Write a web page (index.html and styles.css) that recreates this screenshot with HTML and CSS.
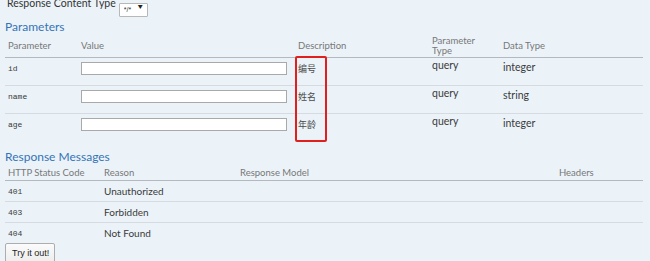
FILE: index.html
```html
<!DOCTYPE html>
<html lang="en">

<head>
	<title>Operation</title>
	<link rel="stylesheet" href="styles.css">
</head>

<body>

	<div class="operation">
		<div class="content-type">
			<label>Response Content Type</label>
			<div class="select-wrap">
				<select>
					<option>*/*</option>
				</select>
			</div>
		</div>

		<h4>Parameters</h4>
		<div class="params-wrap">
			<table class="params">
				<colgroup>
					<col class="c-name">
					<col class="c-value">
					<col class="c-desc">
					<col class="c-ptype">
					<col class="c-dtype">
				</colgroup>
				<thead>
					<tr>
						<th>Parameter</th>
						<th>Value</th>
						<th>Description</th>
						<th class="two-line">Parameter<br>Type</th>
						<th>Data Type</th>
					</tr>
				</thead>
				<tbody>
					<tr>
						<td class="code">id</td>
						<td><input class="param-input" type="text"></td>
						<td class="desc">编号</td>
						<td class="ptype">query</td>
						<td class="dtype">integer</td>
					</tr>
					<tr>
						<td class="code">name</td>
						<td><input class="param-input" type="text"></td>
						<td class="desc">姓名</td>
						<td class="ptype">query</td>
						<td class="dtype">string</td>
					</tr>
					<tr>
						<td class="code">age</td>
						<td><input class="param-input" type="text"></td>
						<td class="desc">年龄</td>
						<td class="ptype">query</td>
						<td class="dtype">integer</td>
					</tr>
				</tbody>
			</table>
			<div class="highlight"></div>
		</div>

		<h4 class="responses-title">Response Messages</h4>
		<table class="responses">
			<colgroup>
				<col class="c-code">
				<col class="c-reason">
				<col class="c-model">
				<col class="c-headers">
			</colgroup>
			<thead>
				<tr>
					<th>HTTP Status Code</th>
					<th>Reason</th>
					<th>Response Model</th>
					<th>Headers</th>
				</tr>
			</thead>
			<tbody>
				<tr>
					<td class="code">401</td>
					<td>Unauthorized</td>
					<td></td>
					<td></td>
				</tr>
				<tr>
					<td class="code">403</td>
					<td>Forbidden</td>
					<td></td>
					<td></td>
				</tr>
				<tr>
					<td class="code">404</td>
					<td>Not Found</td>
					<td></td>
					<td></td>
				</tr>
			</tbody>
		</table>

		<button class="submit" type="button">Try it out!</button>
	</div>

</body>

</html>
```

FILE: styles.css
```css
:root {
	--background-color: #ebf3f9;
	--heading-color: #3673b6;
	--header-text: #777777;
	--text-color: #3a3a3a;
	--head-line: #b3b9bf;
	--row-line: #d5dbe1;
}
body { margin: 0; background: var(--background-color); font-family: Lato, "Noto Sans CJK SC", sans-serif; color: var(--text-color);}

.operation {
	padding: 0 7px 0 5px;
}

/* response content type line, cut by the top of the window */
.content-type {
	display: flex;
	align-items: flex-start;
	height: 16px;
	margin-top: -4px;
	padding-left: 2px;
}
.content-type label { font-size: 10.5px; line-height: 15px; color: #333;}
.select-wrap {
	position: relative;
	margin-left: 3px;
}
.select-wrap select {
	appearance: none;
	-webkit-appearance: none;
	width: 29px;
	height: 14px;
	border: 1px solid #b8b8b8;
	background: #fff;
	font-family: "Liberation Sans", sans-serif;
	font-size: 7px;
	padding: 0 0 0 4px;
	color: #333;
	border-radius: 1px;
}
.select-wrap::after {
	content: "▼";
	position: absolute;
	right: 5px;
	top: 6px;
	font-size: 5px;
	color: #222;
}

h4 {
	margin: 7px 0 0;
	font-size: 12px;
	line-height: 15px;
	font-weight: normal;
	color: var(--heading-color);
}
h4.responses-title { margin-top: 8px;}

table {
	width: 100%;
	border-collapse: separate;
	border-spacing: 0;
	table-layout: fixed;
}
th {
	box-sizing: border-box;
	text-align: left;
	font-weight: normal;
	font-size: 9.5px;
	color: var(--header-text);
	padding: 0 3px;
	vertical-align: middle;
	border-bottom: 1px solid var(--head-line);
}
td {
	box-sizing: border-box;
	vertical-align: top;
	padding: 4px 3px 0;
	font-size: 10px;
	line-height: 13px;
}
tbody tr + tr td { border-top: 1px solid var(--row-line);}
td.code { font-family: "Liberation Mono", monospace; font-size: 8px;}

/* parameters */
.params-wrap { position: relative;}
.params th { height: 24px;}
.params th.two-line { line-height: 9.5px;}
.params td { height: 28px;}
.params tbody tr:first-child td { height: 27px;}
.params .c-name { width: 73px;}
.params .c-value { width: 217px;}
.params .c-desc { width: 134px;}
.params .c-ptype { width: 71px;}
.params td.desc { font-size: 9px; padding-top: 4px; color: #4a4a4a;}
.params td.ptype { font-size: 10.5px; padding-top: 1px;}
.params td.dtype { font-size: 10.5px; padding-top: 3px;}
.param-input {
	display: block;
	box-sizing: border-box;
	width: 206px;
	height: 13px;
	margin: 0;
	padding: 0 2px;
	border: 1px solid #a9a9a9;
	background: #fff;
}

.highlight {
	position: absolute;
	left: 290px;
	top: 22px;
	width: 32px;
	height: 86px;
	box-sizing: border-box;
	border: 2px solid #e0201e;
	border-radius: 2px;
}

/* response messages */
.responses th { height: 17px;}
.responses td { height: 21px;}
.responses tbody tr:first-child td { height: 20px;}
.responses .c-code { width: 96px;}
.responses .c-reason { width: 136px;}
.responses .c-model { width: 319px;}

.submit {
	display: block;
	margin: 0;
	padding: 0 5px 1px 6px;
	height: 21px;
	white-space: nowrap;
	font-family: "Liberation Sans", sans-serif;
	font-size: 9px;
	color: #222;
	background: linear-gradient(#fbfbfb, #ececec);
	border: 1px solid #adadad;
	border-radius: 2px;
}
```
